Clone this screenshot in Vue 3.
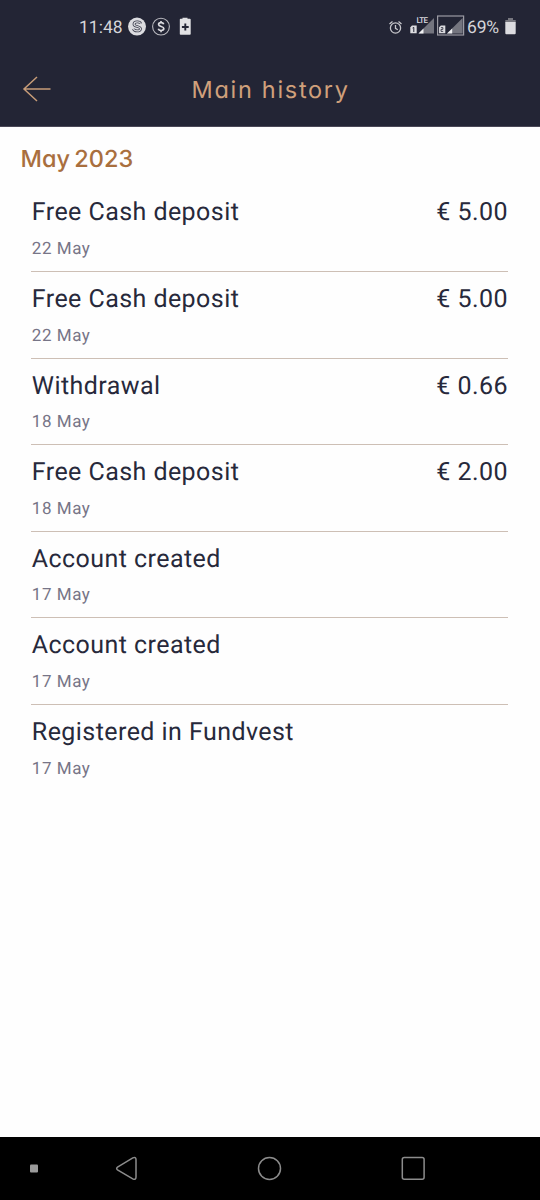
<script setup>
const entries = [
  { title: 'Free Cash deposit', date: '22 May', amount: '€ 5.00' },
  { title: 'Free Cash deposit', date: '22 May', amount: '€ 5.00' },
  { title: 'Withdrawal', date: '18 May', amount: '€ 0.66' },
  { title: 'Free Cash deposit', date: '18 May', amount: '€ 2.00' },
  { title: 'Account created', date: '17 May' },
  { title: 'Account created', date: '17 May' },
  { title: 'Registered in Fundvest', date: '17 May' },
]
</script>

<template>
  <div class="screen">
    <header class="top">
      <div class="status">
        <span class="clock">11:48</span>
        <svg class="notices" width="66" height="20" viewBox="0 0 66 20">
          <circle cx="9" cy="9.6" r="9" fill="#dcdce0" />
          <path d="M12.600 6.600C12 4.200 6 4.200 6 7.200c0 3 6.500 1.600 6.500 4.600 0 3-6.300 2.600-7 0" fill="none" stroke="#3b3d4c" stroke-width="2.800" />
          <path d="M12.600 6.600C12 4.200 6 4.200 6 7.200c0 3 6.500 1.600 6.500 4.600 0 3-6.300 2.600-7 0" fill="none" stroke="#dcdce0" stroke-width="1.200" />
          <circle cx="33" cy="9.600" r="8.400" fill="none" stroke="#b9b9bf" stroke-width="1.100" />
          <path d="M35.700 7.300c-.7-2.400-5.100-2.100-5.100.2 0 2.500 5.200 1.500 5.200 4.100 0 2.400-4.800 2.600-5.500.1M33 4v2M33 13v2.200" fill="none" stroke="#dcdce0" stroke-width="1.700" />
          <path d="M54.500 1.800V.8h5v1h2.400a.8.8 0 0 1 .8.8v14.300a.8.8 0 0 1-.8.8h-9.300a.8.8 0 0 1-.8-.8V2.600a.8.8 0 0 1 .8-.8z" fill="#e1e1e4" />
          <path d="M57.300 6.600v6.800M53.900 10h6.800" stroke="#232535" stroke-width="1.900" />
        </svg>
        <svg class="signals" width="80" height="24" viewBox="0 0 80 24">
          <g fill="none" stroke="#c6c6cb" stroke-width="1.300">
            <circle cx="9.500" cy="13" r="5.100" />
            <path d="M9.500 10v3.300l2.300 1.400M3.500 9l3-2.600M15.500 9l-3-2.600" />
          </g>
          <path d="M26 10.500h4.700v7.800h-6.400v-6z" fill="#dcdce0" />
          <path d="M26.600 13l1.200-.6v4.600" fill="none" stroke="#232535" />
          <path d="M48 3v15.500H32.500z" fill="#74757f" />
          <path d="M37.500 13.400v5.100h-5z" fill="#f0f0f2" />
          <text class="lte" x="30.500" y="8">LTE</text>
          <rect x="51.600" y="1" width="26" height="19" fill="none" stroke="#9b9ba3" stroke-width="1.200" />
          <path d="M54.900 10.500h4.400v7.800h-6.200v-6z" fill="#dcdce0" />
          <path d="M54.900 12.600h2v1.800h-1.900v2h2.200" fill="none" stroke="#232535" stroke-width=".8" />
          <path d="M76.600 3v15.500H61z" fill="#74757f" />
          <path d="M66.200 13.400v5.100h-5.200z" fill="#f0f0f2" />
        </svg>
        <span class="percent">69%</span>
        <svg class="battery" width="11" height="17" viewBox="0 0 11 17">
          <path d="M3 0h5v2H3z" fill="#77777f" />
          <path d="M.3 2h10.400v2.500H.3z" fill="#77777f" />
          <path d="M.3 4h10.400v11.300a1 1 0 0 1-1 1H1.300a1 1 0 0 1-1-1z" fill="#dcdce0" />
        </svg>
      </div>
      <div class="bar">
        <svg class="back" width="30" height="28" viewBox="0 0 30 28">
          <path d="M28.500 14H2M15 2L2 14l13 12" fill="none" stroke="#c79c78" stroke-width="1.500" />
        </svg>
        <h1>Main history</h1>
      </div>
    </header>

    <main>
      <h2>May 2023</h2>
      <ul>
        <li v-for="(entry, i) in entries" :key="i">
          <div class="line">
            <span>{{ entry.title }}</span>
            <span v-if="entry.amount" class="amount">{{ entry.amount }}</span>
          </div>
          <div class="date">{{ entry.date }}</div>
        </li>
      </ul>
    </main>

    <nav>
      <svg width="540" height="63" viewBox="0 0 540 63">
        <rect x="30" y="27.500" width="8" height="8" rx="1" fill="#9b9b9b" />
        <g fill="none" stroke="#8c8c8c" stroke-width="1.500">
          <path d="M117.500 30.200L132.800 20.900Q136 19.500 136 22.500V40Q136 43.500 132.800 41.800L117.500 32.800Q115.800 31.500 117.500 30.200Z" />
          <circle cx="269.500" cy="31.500" r="11" />
          <rect x="402.300" y="20.500" width="21.800" height="21.800" rx="2" />
        </g>
      </svg>
    </nav>
  </div>
</template>

<style>
body { background: #fefefe; }
</style>

<style scoped>
.screen {
  width: 540px;
  height: 1200px;
  display: flex;
  flex-direction: column;
  overflow: hidden;
  background: #fefefe;
  font-family: Roboto, sans-serif;
  text-rendering: geometricPrecision;
}
.top {
  height: 126px;
  flex: none;
  background: #232535;
  border-bottom: 1px solid #4a4857;
  box-sizing: content-box;
}
.status {
  height: 54px;
  display: flex;
  align-items: center;
  padding-left: 79px;
  color: #d5d5d9;
  font-size: 17.500px;
}
.clock { width: 49px; }
.notices { flex: none; }
.signals { flex: none; margin-left: 192px; }
.lte { font: 500 8px Roboto, sans-serif; letter-spacing: -0.6px; fill: #dcdce0; }
.clock, .percent { margin-top: 1px; }
.percent { width: 38px; margin-left: 1px; letter-spacing: -0.2px; }
.battery { flex: none; margin-top: -1px; }
.bar {
  height: 72px;
  display: flex;
  align-items: center;
  padding-left: 22px;
}
.back { flex: none; margin-top: -2px; }
h1, h2 {
  margin: 0;
  font-family: Inter, sans-serif;
  font-feature-settings: "cv11";
  white-space: nowrap;
}
h1 {
  margin-left: 139.500px;
  margin-top: -1px;
  font-size: 23.500px;
  line-height: 28px;
  font-weight: 400;
  letter-spacing: 1.700px;
  color: #d0a07b;
}
main { flex: 1; }
h2 {
  margin: 18px 0 0 20.500px;
  font-size: 23.500px;
  line-height: 28px;
  font-weight: 500;
  letter-spacing: 0;
  word-spacing: -2px;
  color: #a96f3e;
}
ul {
  list-style: none;
  margin: 12.400px 32px 0 31.400px;
  padding: 0;
}
li {
  box-sizing: border-box;
  height: 86.600px;
  padding: 13px 0 0 0.400px;
  border-bottom: 1px solid #cdbfb5;
  color: #27293b;
}
li:last-child { border-bottom: 0; }
.line {
  display: flex;
  justify-content: space-between;
  font-size: 25px;
  line-height: 30px;
  letter-spacing: 0.440px;
}
.date {
  margin-top: 10.700px;
  font-size: 17px;
  line-height: 20px;
  letter-spacing: 0.550px;
  color: #777587;
}
nav { height: 63px; flex: none; background: #000; }
nav svg { display: block; }
</style>
